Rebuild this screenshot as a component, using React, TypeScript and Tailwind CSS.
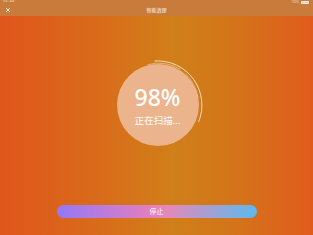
import { X } from 'lucide-react'

function ScanRing() {
  // arc around the progress circle, from the top going clockwise to the lower right
  return (
    <svg width="100" height="100" viewBox="0 0 100 100" className="absolute left-1/2 top-1/2 -translate-x-1/2 -translate-y-1/2">
      <path d="M 47 6 A 44 44 0 0 1 90.8 66.5" fill="none" stroke="rgba(255,255,255,0.8)" strokeWidth="0.9" strokeLinecap="round" />
      <path d="M 40 9.5 A 42 42 0 0 1 72 14" fill="none" stroke="rgba(255,255,255,0.5)" strokeWidth="0.8" strokeLinecap="round" />
      <path d="M 78 19 A 42 42 0 0 1 90 42" fill="none" stroke="rgba(255,255,255,0.45)" strokeWidth="0.6" strokeLinecap="round" />
    </svg>
  )
}

export default function App() {
  return (
    <div
      className="w-[313px] h-[235px] flex flex-col overflow-hidden"
      style={{ fontFamily: '"Noto Sans", "Noto Sans CJK SC", sans-serif' }}
    >
      {/* header */}
      <div className="h-[16px] bg-[#c97b3c] relative flex items-end justify-center pb-[3px]">
        <div className="absolute left-[3px] top-0 text-[3px] text-white/70 leading-none">9:41 AM</div>
        <div className="absolute right-[4px] top-[1px] flex items-center gap-[2px]">
          <span className="text-[3px] text-white/70 leading-none">100%</span>
          <div className="w-[8px] h-[3px] border-[0.5px] border-white/70 rounded-[1px] bg-white/60" />
        </div>
        <X className="absolute left-[5px] top-[7px] text-white" size={6} strokeWidth={4} />
        <span className="text-[5px] text-white/90 leading-none">智能清理</span>
      </div>

      {/* body */}
      <div className="flex-1 flex flex-col items-center bg-[linear-gradient(90deg,#e0561c_0%,#d96a1b_30%,#d07f19_55%,#d3761a_72%,#e05c1d_100%)]">
        <div className="relative mt-[48px] ml-[2px] w-[82px] h-[82px] flex items-center justify-center">
          <div className="w-[82px] h-[82px] rounded-full bg-[#ecb48d] flex flex-col items-center justify-center">
            <span className="text-[23px] leading-none font-medium text-white mt-[2px]">98%</span>
            <span className="text-[9.5px] leading-none text-white mt-[7px]">正在扫描...</span>
          </div>
          <ScanRing />
        </div>
        <button className="mt-[59px] w-[200px] h-[13px] rounded-full bg-[linear-gradient(90deg,#9478f6_0%,#e07ec0_45%,#e389b9_55%,#5cb9f0_100%)] text-white text-[7px] leading-none flex items-center justify-center">
          停止
        </button>
      </div>
    </div>
  )
}
